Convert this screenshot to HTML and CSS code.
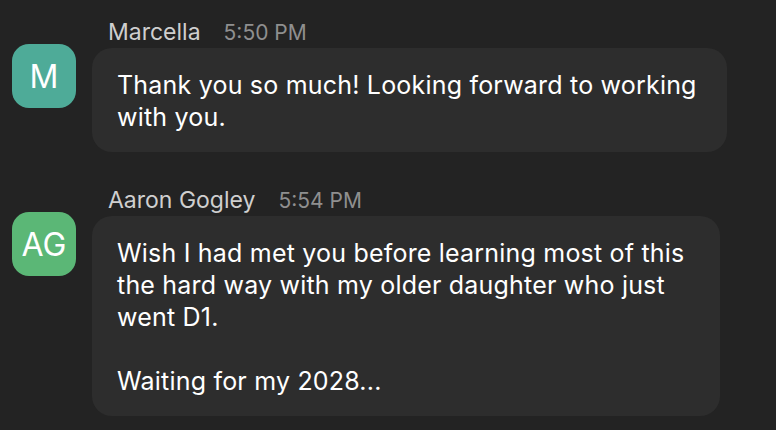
FILE: index.html
```html
<!DOCTYPE html>
<html>
<head>
<meta charset="utf-8">
<link rel="stylesheet" href="styles.css">
</head>
<body>
<div class="chat">
  <div class="message">
    <div class="avatar avatar-teal">M</div>
    <div class="content">
      <div class="header"><span class="name">Marcella</span><span class="time">5:50 PM</span></div>
      <div class="bubble bubble-wide">Thank you so much! Looking forward to working with you.</div>
    </div>
  </div>
  <div class="message">
    <div class="avatar avatar-green">AG</div>
    <div class="content">
      <div class="header"><span class="name">Aaron Gogley</span><span class="time">5:54 PM</span></div>
      <div class="bubble">Wish I had met you before learning most of this the hard way with my older daughter who just went D1.<br><br>Waiting for my 2028...</div>
    </div>
  </div>
</div>
</body>
</html>
```

FILE: styles.css
```css
html, body {
  margin: 0;
  padding: 0;
  background: #232323;
  width: 776px;
  height: 430px;
  overflow: hidden;
  font-family: Inter, "Liberation Sans", Arial, sans-serif;
}
.chat {
  display: flex;
  flex-direction: column;
  gap: 35px;
  padding: 19px 0 0 12px;
}
.message {
  display: flex;
  align-items: flex-start;
  gap: 16px;
}
.avatar {
  width: 64px;
  height: 64px;
  border-radius: 17px;
  margin-top: 25px;
  display: flex;
  align-items: center;
  justify-content: center;
  color: #ffffff;
  font-size: 32px;
  flex-shrink: 0;
}
.avatar-teal { background: #4eab98; }
.avatar-green { background: #5bb776; }
.content {
  display: flex;
  flex-direction: column;
}
.header {
  display: flex;
  align-items: baseline;
  gap: 23px;
  padding-left: 16px;
  height: 26px;
  line-height: 26px;
  margin-bottom: 3px;
}
.name {
  color: #cfcfcf;
  font-size: 23px;
}
.time {
  color: #8f8f8f;
  font-size: 21px;
}
.bubble {
  background: #2d2d2d;
  border-radius: 20px;
  color: #ffffff;
  font-size: 25px;
  line-height: 32px;
  letter-spacing: 0.2px;
  padding: 21px 30px 19px 25px;
  width: 573px;
}
.bubble-wide {
  width: 580px;
}
```
